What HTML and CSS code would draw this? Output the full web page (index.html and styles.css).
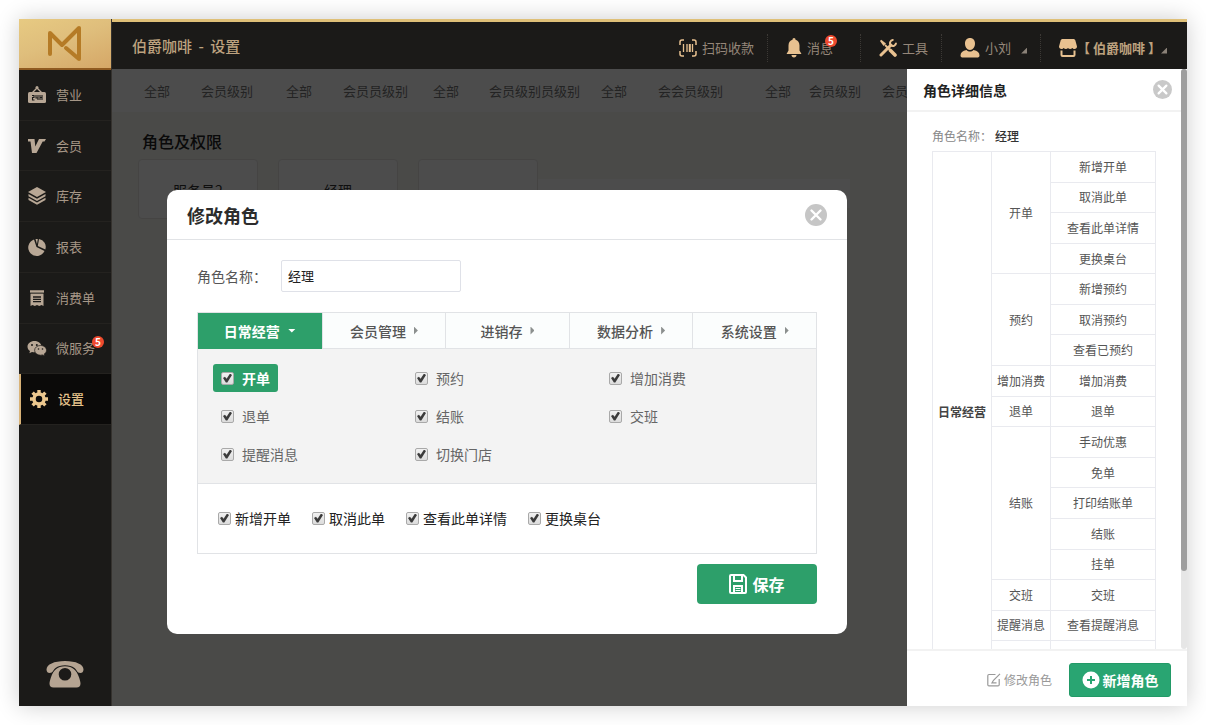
FILE: index.html
```html
<!DOCTYPE html>
<html lang="zh-CN">
<head>
<meta charset="utf-8">
<title>伯爵咖啡 - 设置</title>
<link rel="stylesheet" href="styles.css">
</head>
<body>
<div class="app">
  <aside class="sidebar">
    <a class="logo" href="#" aria-label="首页">
      <svg width="36" height="38" viewBox="0 0 36 38" fill="none" stroke="#b57b26" stroke-width="4" stroke-linejoin="round" stroke-linecap="round"><path d="M3 29V8l12 12L32 3v31L19 23"/></svg>
    </a>
    <nav class="menu">
      <a class="menu-item" href="#">
        <svg class="menu-icon" viewBox="0 0 20 20"><path d="M5 8l5-5 5 5" fill="none" stroke="currentColor" stroke-width="1.4"/><circle cx="10" cy="2.5" r="1.5" fill="currentColor"/><rect x="1" y="7" width="18" height="11" rx="1.5" fill="currentColor"/><path d="M5 10.500h2v2H5.500V15H7.500M9 10v3h2M11 10v5M13 10v5M15 10v5M13 12.500h2" fill="none" stroke="#1b1a18" stroke-width="1.100"/></svg>
        <span>营业</span></a>
      <a class="menu-item" href="#">
        <svg class="menu-icon" viewBox="0 0 20 20" fill="currentColor"><path d="M1 3h6.500l.8 7.500L12 3h7l-1.500 2.500h-1.800L9.500 17H5L3.500 5.500H1z"/></svg>
        <span>会员</span></a>
      <a class="menu-item" href="#">
        <svg class="menu-icon" viewBox="0 0 20 20" fill="currentColor"><path d="M10 1l9 5-9 5-9-5z"/><path d="M1.500 8l8.500 4.700L18.500 8v2.200L10 15l-8.500-4.800zM1.500 11.800l8.500 4.700 8.500-4.700V14L10 18.800 1.500 14z"/></svg>
        <span>库存</span></a>
      <a class="menu-item" href="#">
        <svg class="menu-icon" viewBox="0 0 20 20" fill="currentColor"><path d="M7 2.500L9.500 10l8 4A8.500 8.500 0 1 1 7 2.500z"/><path d="M8.500 2l2.300 0L10 7z"/><path d="M12 2a8 8 0 0 1 6.300 10.500L10.800 9z"/></svg>
        <span>报表</span></a>
      <a class="menu-item" href="#">
        <svg class="menu-icon" viewBox="0 0 20 20"><path d="M3.500 5h13v13l-2-1-2.200 1-2.300-1-2.200 1-2.300-1-2 1z" fill="currentColor"/><path d="M3 3.500h14" stroke="currentColor" stroke-width="2.500"/><path d="M3 5.300h14" stroke="#1b1a18" stroke-width=".8"/><path d="M6 9h8M6 11.300h8M6 13.600h8" stroke="#1b1a18" stroke-width="1.300"/></svg>
        <span>消费单</span></a>
      <a class="menu-item" href="#">
        <svg class="menu-icon" viewBox="0 0 20 20"><path d="M7.500 3C3.500 3 .5 5.500.5 8.700c0 1.800 1 3.300 2.500 4.300l-.6 2.200L5 13.900c.8.2 1.600.3 2.500.3 4 0 7-2.500 7-5.600S11.500 3 7.500 3z" fill="currentColor"/><path d="M13.500 7.500c-3.200 0-5.900 2.100-5.900 4.800 0 2.800 2.700 4.900 5.900 4.900.7 0 1.400-.1 2-.3l2.200 1.100-.5-1.900c1.300-.9 2.300-2.200 2.300-3.800 0-2.700-2.700-4.800-6-4.800z" fill="currentColor" stroke="#1b1a18" stroke-width=".7"/><g fill="#1b1a18"><circle cx="5" cy="7" r="1"/><circle cx="9.800" cy="7" r="1"/><circle cx="11.500" cy="11" r=".8"/><circle cx="15.500" cy="11" r=".8"/></g></svg>
        <span>微服务</span><b class="badge badge-menu">5</b></a>
      <a class="menu-item menu-item-active" href="#">
        <svg class="menu-icon" viewBox="0 0 20 20"><circle cx="10" cy="10" r="5" fill="none" stroke="currentColor" stroke-width="3.500"/><path d="M10 1v3.500M10 15.500V19M1 10h3.500M15.500 10H19M3.600 3.600l2.500 2.500M13.900 13.900l2.500 2.500M3.600 16.400l2.500-2.500M13.900 6.100l2.500-2.500" stroke="currentColor" stroke-width="3.400"/></svg>
        <span>设置</span></a>
    </nav>
    <a class="phone" href="#" aria-label="联系电话">
      <svg width="38" height="28" viewBox="0 0 38 28" fill="#b5a492"><path d="M19 1C8 1 .5 4.500.5 9.500c0 2.500 1.500 3.500 3 3.500 4 0 3.500-3.500 6-5C12 6 15 5.200 19 5.200S26 6 28.500 8c2.500 1.500 2 5 6 5 1.500 0 3-1 3-3.500C37.500 4.500 30 1 19 1z"/><path fill-rule="evenodd" d="M19 6.200c-8 0-11.500 4-14 11-.8 2.300-1.500 4.800-1.500 6.300 0 2.500 1.300 4 4 4h23c2.700 0 4-1.500 4-4 0-1.500-.7-4-1.500-6.300-2.500-7-6-11-14-11zM19 8a6.300 6.300 0 1 1 0 12.600A6.300 6.300 0 0 1 19 8z"/></svg>
    </a>
  </aside>

  <div class="content">
    <header class="topbar">
      <h1 class="topbar-title">伯爵咖啡<span class="dash"> - </span>设置</h1>
      <nav class="tools">
        <a class="tool" href="#">
          <svg width="18" height="18" viewBox="0 0 18 18" fill="none" stroke="currentColor"><path d="M5 1H3a2 2 0 0 0-2 2v3M13 1h2a2 2 0 0 1 2 2v3M5 17H3a2 2 0 0 1-2-2v-3M13 17h2a2 2 0 0 0 2-2v-3" stroke-width="1.500"/><path d="M4.500 5v8M8 5v8M13.500 5v8" stroke-width="1.300"/><path d="M10.800 5v8" stroke-width="2"/></svg>
          <span>扫码收款</span></a>
        <a class="tool" href="#">
          <svg width="16" height="20" viewBox="0 0 16 20" fill="currentColor"><path d="M8 0c1 0 1.500.8 1.500 1.800 2.500.7 4 2.700 4 5.700v5L15.500 16H.5l2-3.500v-5c0-3 1.500-5 4-5.700C6.500.8 7 0 8 0zM5.500 17h5c0 1.500-1 2.500-2.500 2.500S5.500 18.500 5.500 17z"/></svg>
          <span>消息</span><b class="badge badge-tool">5</b></a>
        <a class="tool" href="#">
          <svg width="18" height="18" viewBox="0 0 18 18" fill="none" stroke="currentColor"><path d="M6 6l5 5" stroke-width="1.800"/><path d="M11.500 11.500l4.500 4.500" stroke-width="3.600" stroke-linecap="round"/><path d="M1 2l1.200-1.200L7 4.500 4.500 7z" fill="currentColor" stroke="none"/><path d="M2 16l10-10" stroke-width="3" stroke-linecap="round"/><path d="M12 6.500A3.200 3.200 0 0 1 14.500 1M12 6.500A3.200 3.200 0 0 0 17 3.800" stroke-width="2"/></svg>
          <span>工具</span></a>
        <a class="tool" href="#">
          <svg width="20" height="20" viewBox="0 0 20 20" fill="currentColor"><path d="M10 0c3 0 5 2.200 5 5.500S13 12 10 12 5 8.800 5 5.500 7 0 10 0zM6.500 12c1 1 2.200 1.500 3.500 1.500s2.500-.5 3.500-1.500c4 .8 6 2.500 6 5.500 0 1.500-1 2-2.500 2H3C1.500 19.500.5 19 .5 17.500c0-3 2-4.700 6-5.500z"/></svg>
          <span>小刘</span><i class="corner"></i></a>
        <a class="tool tool-shop" href="#">
          <svg width="18" height="18" viewBox="0 0 18 18"><path d="M4 0h10c1.500 0 2.200.6 2.500 2L18 7.500C18 9 17 10 15.500 10c-1 0-1.700-.5-2.200-1-1 1.300-3.300 1.300-4.300 0-1 1.300-3.300 1.300-4.300 0-.5.500-1.200 1-2.200 1C1 10 0 9 0 7.500L1.500 2C1.800.6 2.500 0 4 0z" fill="currentColor"/><path d="M2.500 11.500V16q0 1 1 1h11q1 0 1-1v-4.500" fill="none" stroke="currentColor" stroke-width="2"/></svg>
          <b>【 伯爵咖啡 】</b><i class="corner"></i></a>
      </nav>
    </header>

    <div class="body">
      <main class="main">
        <nav class="levels">
          <span>全部</span><span>会员级别</span><span>全部</span><span>会员员级别</span><span>全部</span><span>会员级别员级别</span><span>全部</span><span>会会员级别</span><span>全部</span><span>会员级别</span><span>会员</span>
        </nav>
        <h2 class="main-title">角色及权限</h2>
        <div class="cards">
          <div class="card">服务员2</div>
          <div class="card">经理</div>
          <div class="card"></div>
          <div class="strip"></div>
        </div>

        <div class="overlay">
          <form class="modal" role="dialog" aria-labelledby="modal-title">
            <header class="modal-head">
              <h2 id="modal-title">修改角色</h2>
              <button class="close close-lg" type="button" aria-label="关闭"><svg viewBox="0 0 22 22"><circle cx="11" cy="11" r="11" fill="#c6c6c6"/><path d="M6.500 6.500l9 9M15.500 6.500l-9 9" stroke="#fff" stroke-width="2.400" stroke-linecap="round"/></svg></button>
            </header>
            <div class="modal-body">
              <div class="field">
                <label for="role-name">角色名称：</label>
                <input id="role-name" type="text" value="经理">
              </div>
              <div class="perms">
                <div class="tabs" role="tablist">
                  <button class="tab tab-active" type="button" role="tab" aria-selected="true">日常经营<i class="arrow arrow-down"></i></button>
                  <button class="tab" type="button" role="tab">会员管理<i class="arrow"></i></button>
                  <button class="tab" type="button" role="tab">进销存<i class="arrow"></i></button>
                  <button class="tab" type="button" role="tab">数据分析<i class="arrow"></i></button>
                  <button class="tab" type="button" role="tab">系统设置<i class="arrow"></i></button>
                </div>
                <div class="groups">
                  <label class="check check-active"><input type="checkbox" checked>开单</label>
                  <label class="check"><input type="checkbox" checked>预约</label>
                  <label class="check"><input type="checkbox" checked>增加消费</label>
                  <label class="check"><input type="checkbox" checked>退单</label>
                  <label class="check"><input type="checkbox" checked>结账</label>
                  <label class="check"><input type="checkbox" checked>交班</label>
                  <label class="check"><input type="checkbox" checked>提醒消息</label>
                  <label class="check"><input type="checkbox" checked>切换门店</label>
                </div>
                <div class="details">
                  <label class="option"><input type="checkbox" checked>新增开单</label>
                  <label class="option"><input type="checkbox" checked>取消此单</label>
                  <label class="option"><input type="checkbox" checked>查看此单详情</label>
                  <label class="option"><input type="checkbox" checked>更换桌台</label>
                </div>
              </div>
              <button class="save" type="submit">
                <svg width="18" height="20" viewBox="0 0 18 20" fill="none" stroke="#fff" stroke-width="2"><path d="M2 1h12.500L17 3.500V18q0 1-1 1H2q-1 0-1-1V2q0-1 1-1z"/><path d="M5 1v6h8V1M5 19v-7h8v7"/><path d="M6.500 14.500h5M6.500 16.500h5" stroke-width="1"/></svg>
                保存</button>
            </div>
          </form>
        </div>
      </main>

      <aside class="panel">
        <div class="panel-scroll">
          <header class="panel-head">
            <h2>角色详细信息</h2>
            <button class="close" type="button" aria-label="关闭"><svg viewBox="0 0 22 22"><circle cx="11" cy="11" r="11" fill="#c9c9c9"/><path d="M6.500 6.500l9 9M15.500 6.500l-9 9" stroke="#fff" stroke-width="2.600" stroke-linecap="round"/></svg></button>
          </header>
          <p class="role">角色名称：<b>经理</b></p>
          <table class="role-table">
            <colgroup><col class="col-a"><col class="col-a"><col></colgroup>
            <tbody>
              <tr><th rowspan="17">日常经营</th><td rowspan="4">开单</td><td>新增开单</td></tr>
              <tr><td>取消此单</td></tr>
              <tr><td>查看此单详情</td></tr>
              <tr><td>更换桌台</td></tr>
              <tr><td rowspan="3">预约</td><td>新增预约</td></tr>
              <tr><td>取消预约</td></tr>
              <tr><td>查看已预约</td></tr>
              <tr><td>增加消费</td><td>增加消费</td></tr>
              <tr><td>退单</td><td>退单</td></tr>
              <tr><td rowspan="5">结账</td><td>手动优惠</td></tr>
              <tr><td>免单</td></tr>
              <tr><td>打印结账单</td></tr>
              <tr><td>结账</td></tr>
              <tr><td>挂单</td></tr>
              <tr><td>交班</td><td>交班</td></tr>
              <tr><td>提醒消息</td><td>查看提醒消息</td></tr>
              <tr><td>&nbsp;</td><td>&nbsp;</td></tr>
            </tbody>
          </table>
          <div class="track"><div class="thumb"></div></div>
        </div>
        <footer class="panel-foot">
          <button class="edit" type="button">
            <svg width="14" height="14" viewBox="0 0 14 14" fill="none" stroke="currentColor" stroke-width="1.200"><path d="M8.500 1.500H2q-1.200 0-1.200 1.200v9q0 1.200 1.200 1.200h9q1.200 0 1.200-1.200V6"/><path d="M13 .8L6.500 7.300l-1.500 2.500h4.500"/></svg>
            修改角色</button>
          <button class="add" type="button">
            <svg width="18" height="18" viewBox="0 0 18 18"><circle cx="9" cy="9" r="8.500" fill="#fff"/><path d="M9 5v8M5 9h8" stroke="#29a572" stroke-width="2"/></svg>
            新增角色</button>
        </footer>
      </aside>
    </div>
  </div>
</div>
</body>
</html>
```

FILE: styles.css
```css
* { box-sizing: border-box; }

body {
  margin: 0;
  height: 100vh;
  padding: 19px;
  background: #fff;
  font: 14px/20px "Noto Sans CJK SC", sans-serif;
  color: #333;
}

h1, h2, p { margin: 0; }
a { color: inherit; text-decoration: none; }
button { font: inherit; padding: 0; border: 0; background: none; cursor: pointer; }
svg { display: block; flex: none; }

.app {
  display: flex;
  height: 100%;
  box-shadow: 0 0 22px rgba(0, 0, 0, .2);
}

/* Sidebar */
.sidebar {
  flex: none;
  width: 93px;
  display: flex;
  flex-direction: column;
  background: #1b1a18;
  border-right: 1px solid #35322e;
}
.logo {
  height: 51px;
  display: flex;
  align-items: center;
  justify-content: center;
  background: linear-gradient(160deg, #e7ca82, #dfbe7c 45%, #d5a767);
  border-bottom: 2px solid #8f5a20;
}
.menu {
  height: 355px;
  display: grid;
  grid-auto-rows: 1fr;
}
.menu-item {
  position: relative;
  display: flex;
  align-items: center;
  gap: 9px;
  padding-left: 8px;
  border-bottom: 1px solid #24221f;
  font-size: 13px;
  color: #a69787;
}
.menu-icon { width: 20px; height: 20px; color: #b8a795; }
.menu-item-active {
  background: #0b0a09;
  border-left: 2px solid #d9b378;
  font-weight: 500;
  color: #e5c28b;
}
.menu-item-active .menu-icon { color: #ecc78e; }
.badge {
  position: absolute;
  width: 12px;
  height: 12px;
  border-radius: 50%;
  background: #ee4a2e;
  color: #fff;
  font-size: 10px;
  line-height: 12px;
  text-align: center;
}
.badge-menu { top: 12px; right: 7px; }
.badge-tool { top: 1px; right: -4px; }
.phone {
  margin: auto auto 18px;
}

/* Top bar */
.content { flex: 1; min-width: 0; display: flex; flex-direction: column; }
.topbar {
  flex: none;
  height: 50px;
  display: flex;
  align-items: center;
  justify-content: space-between;
  padding: 0 20px;
  border-top: 3px solid #dfc078;
  background: #1b1a18;
}
.topbar-title { font-size: 15px; font-weight: 500; color: #bda27f; }
.dash { margin: 0 3px; }
.tools { display: flex; align-items: center; padding-top: 4px; }
.tool {
  position: relative;
  display: flex;
  align-items: center;
  gap: 5px;
  font-size: 13px;
  color: #95877a;
}
.tool + .tool { margin-left: 13px; padding-left: 18px; border-left: 1px dotted #3c3935; height: 28px; }
.tool:nth-child(2) { margin-right: 14px; }
.tool svg { color: #e8c190; }
.tool-shop { gap: 0; color: #bda27f; }
.corner {
  width: 6px;
  height: 6px;
  margin: 6px 0 0 5px;
  background: #8b8278;
  clip-path: polygon(100% 0, 100% 100%, 0 100%);
}
.tool-shop .corner { margin-left: 0; }

/* Page behind the dialog */
.body { flex: 1; min-height: 0; display: flex; }
.main {
  position: relative;
  flex: 1;
  min-width: 0;
  overflow: hidden;
  background: #f8f7f2;
}
.levels {
  display: grid;
  grid-template-columns: 57px 85px 57px 90px 56px 112px 57px 107px 44px 73px 52px;
  height: 43px;
  padding-left: 32px;
  line-height: 44px;
  font-size: 13px;
  white-space: nowrap;
  color: #777;
  background: #fff;
}
.main-title { padding: 18px 30px 7px; font-size: 16px; line-height: 22px; font-weight: 500; color: #222; }
.cards { display: flex; gap: 20px; padding-left: 26px; }
.card {
  width: 120px;
  height: 60px;
  border: 1px solid #e6e5e1;
  border-radius: 4px;
  background: #fff;
  line-height: 60px;
  text-align: center;
}
.strip { width: 312px; height: 29px; margin: 20px 0 0 -20px; background: #fff; }

/* Dialog */
.overlay {
  position: absolute;
  inset: 0;
  padding: 121px 60px 0 55px;
  background: rgba(0, 0, 0, .7);
}
.modal { border-radius: 10px; background: #fff; }
.modal-head {
  height: 50px;
  display: flex;
  align-items: center;
  justify-content: space-between;
  padding: 0 20px;
  border-bottom: 1px solid #e1e3e6;
}
.modal-head h2 { font-size: 18px; font-weight: 700; color: #2c2c2c; }
.close svg { width: 19px; height: 19px; }
.close-lg svg { width: 22px; height: 22px; }
.modal-body { display: flex; flex-direction: column; padding: 20px 30px 30px; }
.field { display: flex; align-items: center; gap: 14px; margin-bottom: 20px; color: #555; }
.field input {
  width: 180px;
  height: 32px;
  padding: 0 6px 2px;
  border: 1px solid #dfe1e8;
  border-radius: 2px;
  font: inherit;
  font-size: 13px;
  color: #222;
}
.perms { border: 1px solid #e1e3e6; }
.tabs { display: grid; grid-template-columns: repeat(5, 1fr); border-bottom: 1px solid #e1e3e6; }
.tab {
  height: 35px;
  display: flex;
  align-items: center;
  justify-content: center;
  gap: 8px;
  font-weight: 500;
  color: #555;
  background: #fbfdfd;
}
.tab + .tab { border-left: 1px solid #e1e3e6; }
.tab-active { background: #2d9f6a; font-weight: 700; color: #fff; box-shadow: 0 1px #2d9f6a; }
.arrow {
  width: 4px;
  height: 8px;
  background: #8b8f8e;
  clip-path: polygon(0 0, 100% 50%, 0 100%);
}
.arrow-down { width: 8px; height: 4px; background: #fff; clip-path: polygon(0 0, 100% 0, 50% 100%); }
.groups {
  display: grid;
  grid-template-columns: 194px 194px 1fr;
  row-gap: 10px;
  justify-items: start;
  padding: 15px;
  border-bottom: 1px solid #e1e3e6;
  background: #f3f3f3;
}
.check {
  height: 28px;
  display: flex;
  align-items: center;
  gap: 8px;
  padding: 0 8px;
  border-radius: 3px;
  color: #666;
}
.check-active { background: #2d9f6a; font-weight: 700; color: #fff; }
.details { display: flex; gap: 21px; padding: 24px 20px 25px; }
.option { display: flex; align-items: center; gap: 4px; color: #222; }
input[type="checkbox"] {
  appearance: none;
  width: 13px;
  height: 13px;
  margin: 0;
  border: 1px solid #a9a9a9;
  border-radius: 2px;
  background: linear-gradient(#f1f1f1, #dcdcdc);
}
input[type="checkbox"]:checked::before {
  content: "";
  display: block;
  height: 9px;
  margin: 1px;
  background: #3b3b3b;
  clip-path: polygon(0 50%, 22% 36%, 40% 58%, 78% 0, 100% 16%, 48% 100%, 32% 100%);
}
.save {
  align-self: flex-end;
  width: 120px;
  height: 40px;
  margin-top: 10px;
  display: flex;
  align-items: center;
  justify-content: center;
  gap: 5px;
  border-radius: 4px;
  background: #2d9f6a;
  color: #fff;
  font-size: 16px;
  font-weight: 700;
}

/* Role details */
.panel { flex: none; width: 280px; display: flex; flex-direction: column; background: #fff; }
.panel-scroll { position: relative; flex: 1; min-height: 0; overflow: hidden; }
.panel-head {
  height: 43px;
  display: flex;
  align-items: center;
  justify-content: space-between;
  padding: 0 15px 0 16px;
  border-bottom: 2px solid #f2f2f2;
}
.panel-head h2 { font-size: 14px; font-weight: 700; color: #222; }
.role { padding: 14px 25px 5px; font-size: 12px; color: #888; }
.role b { margin-left: 3px; font-weight: 500; color: #333; }
.role-table {
  width: 224px;
  height: 521px;
  margin-left: 25px;
  table-layout: fixed;
  border-collapse: collapse;
  font-size: 12px;
  line-height: 18px;
  text-align: center;
  white-space: nowrap;
  color: #555;
}
.col-a { width: 59px; }
.role-table th, .role-table td { padding: 0; border: 1px solid #e9eaef; }
.role-table th { font-weight: 700; color: #444; }
.track {
  position: absolute;
  inset: 0 0 0 auto;
  width: 6px;
  border-radius: 3px;
  background: #e6e6e6;
}
.thumb { height: 502px; border-radius: 3px; background: #9e9e9e; }
.panel-foot {
  flex: none;
  display: flex;
  align-items: center;
  justify-content: flex-end;
  gap: 17px;
  height: 57px;
  padding: 3px 16px 0 0;
  border-top: 2px solid #f2f2f2;
}
.edit { display: flex; align-items: center; gap: 3px; font-size: 12px; color: #999; }
.add {
  width: 102px;
  height: 34px;
  display: flex;
  align-items: center;
  justify-content: center;
  gap: 3px;
  border: 1px solid #229a67;
  border-radius: 3px;
  background: #29a572;
  color: #fff;
  font-weight: 700;
}
```
